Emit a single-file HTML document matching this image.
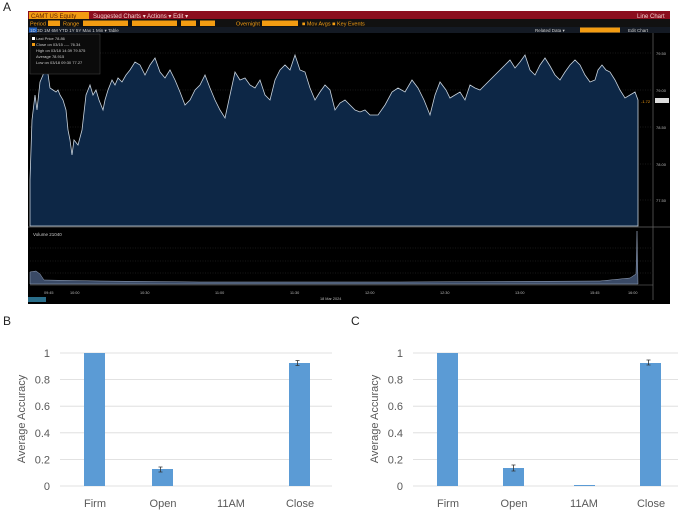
<!DOCTYPE html>
<html><head><meta charset="utf-8"><style>
html,body{margin:0;padding:0;background:#fff;width:685px;height:513px;overflow:hidden}
svg{display:block}
text{font-family:"Liberation Sans",sans-serif}
</style></head><body>
<svg width="685" height="513" viewBox="0 0 685 513" xmlns="http://www.w3.org/2000/svg">
<text x="3" y="11" font-size="12" fill="#222">A</text>
<!-- Bloomberg panel -->
<rect x="28" y="11" width="642" height="293" fill="#000"/>
<rect x="28" y="11" width="642" height="8" fill="#8b0e1e"/>
<rect x="29" y="12" width="60" height="7" fill="#f39c12"/>
<text x="31" y="18" font-size="6" fill="#5a1a00">CAMT US Equity</text>
<text x="93" y="18" font-size="6" fill="#f3d0d0">Suggested Charts ▾   Actions ▾   Edit ▾</text>
<text x="637" y="18" font-size="6" fill="#f3d0d0">Line Chart</text>
<rect x="28" y="19" width="642" height="8" fill="#111"/>
<text x="30" y="25.5" font-size="5.5" fill="#f39c12">Period</text>
<rect x="48" y="20.5" width="12" height="5.5" fill="#f39c12"/>
<text x="63" y="25.5" font-size="5.5" fill="#f39c12">Range</text>
<rect x="83" y="20.5" width="45" height="5.5" fill="#f39c12"/>
<rect x="132" y="20.5" width="45" height="5.5" fill="#f39c12"/>
<rect x="181" y="20.5" width="15" height="5.5" fill="#f39c12"/>
<rect x="200" y="20.5" width="15" height="5.5" fill="#f39c12"/>
<text x="236" y="25.5" font-size="5.5" fill="#f39c12">Overnight</text>
<rect x="262" y="20.5" width="36" height="5.5" fill="#f39c12"/>
<text x="302" y="25.5" font-size="5.5" fill="#f39c12">■ Mov Avgs   ■ Key Events</text>
<rect x="28" y="27" width="642" height="6" fill="#141a24"/>
<rect x="29" y="27.5" width="8" height="5" fill="#1f5fbf"/>
<text x="30" y="32" font-size="4.5" fill="#ccc">1D   3D   1M   6M   YTD   1Y   5Y   Max   1 Min ▾        Table</text>
<text x="535" y="32" font-size="4.5" fill="#ccc">Related Data ▾</text>
<rect x="580" y="27.5" width="40" height="5" fill="#f39c12"/>
<text x="628" y="32" font-size="4.5" fill="#ccc">Edit Chart</text>
<!-- grid -->
<g stroke="#333" stroke-width="0.5" stroke-dasharray="1,1.5">
<line x1="30" y1="53" x2="653" y2="53"/><line x1="30" y1="90" x2="653" y2="90"/>
<line x1="30" y1="127" x2="653" y2="127"/><line x1="30" y1="164" x2="653" y2="164"/>
<line x1="30" y1="200" x2="653" y2="200"/>
</g>
<path d="M30,226 L30,180 L32,120 L35,95 L37,110 L40,82 L43,75 L46,60 L50,88 L53,90 L56,92 L58,90 L60,95 L63,100 L66,110 L68,130 L70,140 L72,155 L74,140 L78,145 L82,130 L86,95 L90,85 L93,95 L96,90 L99,100 L103,110 L105,100 L108,90 L112,80 L115,85 L118,78 L122,82 L126,75 L130,70 L135,62 L140,65 L145,75 L150,65 L155,58 L160,72 L165,78 L170,70 L175,80 L180,92 L185,105 L190,100 L195,90 L200,85 L205,75 L210,88 L215,100 L220,110 L225,118 L230,95 L235,72 L240,80 L245,78 L250,85 L255,88 L260,80 L265,95 L270,100 L275,80 L280,70 L285,65 L290,70 L295,55 L300,70 L305,72 L310,88 L315,100 L320,92 L325,85 L330,90 L335,110 L340,103 L345,100 L350,105 L355,110 L360,112 L365,110 L370,115 L378,115 L385,105 L392,92 L398,88 L405,92 L412,80 L418,88 L424,100 L430,115 L435,95 L440,82 L446,90 L450,98 L455,95 L460,92 L465,100 L470,85 L475,88 L480,90 L485,85 L490,80 L495,75 L500,70 L505,65 L510,60 L515,68 L520,62 L525,55 L530,70 L535,75 L540,65 L545,58 L550,66 L555,75 L560,80 L565,72 L570,65 L575,60 L580,65 L585,75 L590,82 L595,80 L598,70 L602,65 L606,70 L610,72 L615,80 L620,90 L625,98 L630,95 L635,92 L638,100 L638,226 Z" fill="#0d2746" stroke="#c8d3de" stroke-width="0.8"/>
<line x1="653" y1="33" x2="653" y2="300" stroke="#777" stroke-width="0.6"/>
<g font-size="4" fill="#bbb">
<text x="656" y="55">79.50</text><text x="656" y="92">79.00</text><text x="656" y="129">78.50</text><text x="656" y="166">78.00</text><text x="656" y="202">77.50</text>
</g>
<rect x="655" y="98" width="14" height="5" fill="#ddd"/>
<text x="641" y="103" font-size="4" fill="#f39c12">-1.72</text>
<!-- legend -->
<rect x="30" y="34" width="70" height="40" fill="#0b0b0b" stroke="#444" stroke-width="0.5"/>
<g font-size="4" fill="#ccc">
<text x="36" y="40">Last Price             78.86</text>
<text x="36" y="46">Close on 03/15 ---- 76.34</text>
<text x="36" y="52">High on 03/18 14:39 79.575</text>
<text x="36" y="58">Average               78.915</text>
<text x="36" y="64">Low on 03/18 09:30  77.27</text>
</g>
<rect x="32" y="37" width="3" height="3" fill="#fff"/><rect x="32" y="43" width="3" height="3" fill="#f39c12"/>
<!-- volume -->
<line x1="28" y1="227" x2="670" y2="227" stroke="#666" stroke-width="0.8"/>
<text x="33" y="236" font-size="4.5" fill="#ccc">Volume 21040</text>
<g stroke="#333" stroke-width="0.5" stroke-dasharray="1,1.5">
<line x1="30" y1="248" x2="653" y2="248"/><line x1="30" y1="261" x2="653" y2="261"/><line x1="30" y1="273" x2="653" y2="273"/>
</g>
<path d="M30,284 L30,272 L36,271 L40,274 L44,280 L100,281 L200,282 L400,282 L600,281 L630,278 L636,274 L637,231 L638,284 Z" fill="#3a4a66" stroke="#9aa8c0" stroke-width="0.5"/>
<line x1="30" y1="285" x2="653" y2="285" stroke="#777" stroke-width="0.6"/>
<g font-size="3.8" fill="#bbb">
<text x="44" y="294">09:45</text><text x="70" y="294">10:00</text><text x="140" y="294">10:30</text><text x="215" y="294">11:00</text><text x="290" y="294">11:30</text><text x="365" y="294">12:00</text><text x="440" y="294">12:30</text><text x="515" y="294">13:00</text><text x="590" y="294">15:45</text><text x="628" y="294">16:00</text>
<text x="320" y="300">18 Mar 2024</text>
</g>
<rect x="28" y="297" width="18" height="5" fill="#2a6e8a"/>
<!-- B and C -->
<g id="B">
<text x="3" y="325" font-size="12" fill="#222">B</text>
<g stroke="#d9d9d9" stroke-width="0.8">
<line x1="60" y1="353" x2="332" y2="353"/><line x1="60" y1="379.6" x2="332" y2="379.6"/><line x1="60" y1="406.2" x2="332" y2="406.2"/><line x1="60" y1="432.8" x2="332" y2="432.8"/><line x1="60" y1="459.4" x2="332" y2="459.4"/><line x1="60" y1="486" x2="332" y2="486"/>
</g>
<g font-size="11" fill="#595959" text-anchor="end">
<text x="50" y="357">1</text><text x="50" y="383.6">0.8</text><text x="50" y="410.2">0.6</text><text x="50" y="436.8">0.4</text><text x="50" y="463.4">0.2</text><text x="50" y="490">0</text>
</g>
<text transform="translate(25,419) rotate(-90)" font-size="11" fill="#595959" text-anchor="middle">Average Accuracy</text>
<rect x="84" y="353" width="21" height="133" fill="#5b9bd5"/>
<rect x="152" y="469" width="21" height="17" fill="#5b9bd5"/>
<rect x="289" y="363" width="21" height="123" fill="#5b9bd5"/>
<path d="M160.5,467v5M158.5,467h4M158.5,472h4M297.5,360.5v5M295.5,360.5h4M295.5,365.5h4" stroke="#333" stroke-width="0.8"/>
<g font-size="11" fill="#595959" text-anchor="middle">
<text x="95" y="507">Firm</text><text x="163" y="507">Open</text><text x="231" y="507">11AM</text><text x="300" y="507">Close</text>
</g>
</g>
<g transform="translate(353,0)">
<text x="-2" y="325" font-size="12" fill="#222">C</text>
<g stroke="#d9d9d9" stroke-width="0.8">
<line x1="60" y1="353" x2="325" y2="353"/><line x1="60" y1="379.6" x2="325" y2="379.6"/><line x1="60" y1="406.2" x2="325" y2="406.2"/><line x1="60" y1="432.8" x2="325" y2="432.8"/><line x1="60" y1="459.4" x2="325" y2="459.4"/><line x1="60" y1="486" x2="325" y2="486"/>
</g>
<g font-size="11" fill="#595959" text-anchor="end">
<text x="50" y="357">1</text><text x="50" y="383.6">0.8</text><text x="50" y="410.2">0.6</text><text x="50" y="436.8">0.4</text><text x="50" y="463.4">0.2</text><text x="50" y="490">0</text>
</g>
<text transform="translate(25,419) rotate(-90)" font-size="11" fill="#595959" text-anchor="middle">Average Accuracy</text>
<rect x="84" y="353" width="21" height="133" fill="#5b9bd5"/>
<rect x="150" y="468" width="21" height="18" fill="#5b9bd5"/>
<rect x="221" y="485" width="21" height="1" fill="#5b9bd5"/>
<rect x="287" y="363" width="21" height="123" fill="#5b9bd5"/>
<path d="M160.5,465v6M158.5,465h4M158.5,471h4M295.5,360v5M293.5,360h4M293.5,365h4" stroke="#333" stroke-width="0.8"/>
<g font-size="11" fill="#595959" text-anchor="middle">
<text x="95" y="507">Firm</text><text x="161" y="507">Open</text><text x="231" y="507">11AM</text><text x="298" y="507">Close</text>
</g>
</g>
</svg>
</body></html>
